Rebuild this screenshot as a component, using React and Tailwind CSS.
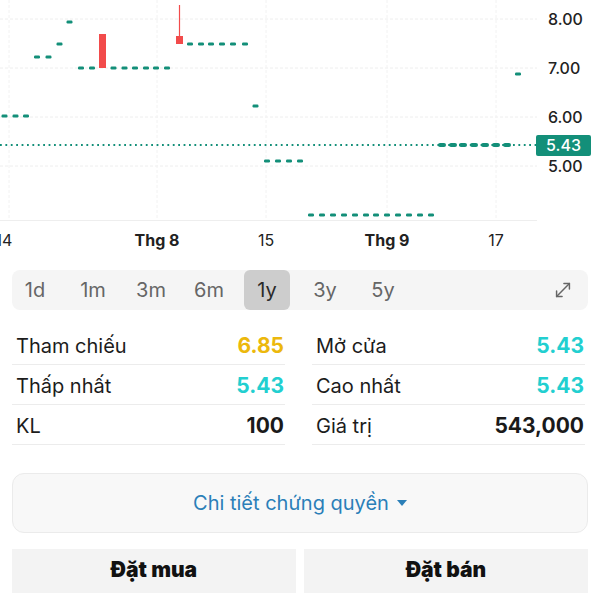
import React from "react";
import { MoveDiagonal } from "lucide-react";

const TEAL = "#138f79";

const dashes = [
  [4.5, 116], [15.5, 116], [26, 116],
  [37, 57], [48.5, 57],
  [59.5, 44],
  [69.5, 22],
  [81, 68], [92, 68],
  [113.5, 68], [124.5, 68], [135, 68], [146, 68], [156, 68], [167, 68],
  [190, 44], [201, 44], [211, 44], [222, 44], [233, 44], [245, 44],
  [255.5, 106],
  [267, 161], [278, 161], [289, 161], [300, 161],
  [311, 215], [322, 215], [333, 215], [344, 215], [355, 215], [366, 215],
  [376, 215], [387, 215], [398, 215], [409, 215], [420, 215], [431, 215],
  [518, 74],
];
const thick = [442, 453, 463, 474, 485, 496, 507];

function Chart() {
  const hGrid = [19, 68, 117, 166];
  const vGrid = [9, 157, 266, 387, 496];
  return (
    <svg width="600" height="270" viewBox="0 0 600 270" className="block">
      {hGrid.map((y) => (
        <line key={"h" + y} x1="0" x2="537" y1={y} y2={y} stroke="#eeeeee" strokeWidth="1" strokeDasharray="3 2" />
      ))}
      {vGrid.map((x) => (
        <line key={"v" + x} x1={x} x2={x} y1="0" y2="220" stroke="#f2f2f2" strokeWidth="1" strokeDasharray="3 2" />
      ))}
      <line x1="0" x2="537" y1="220.5" y2="220.5" stroke="#eeeeee" strokeWidth="1" />
      <line x1="0" x2="536" y1="145" y2="145" stroke={TEAL} strokeWidth="1.8" strokeDasharray="1.8 3.6" />
      {dashes.map(([x, y], i) => (
        <rect key={i} x={x - 3} y={y - 1.5} width="6" height="3" rx="1.2" fill={TEAL} />
      ))}
      {thick.map((x) => (
        <rect key={"t" + x} x={x - 4} y={143} width="8" height="4" rx="2" fill={TEAL} />
      ))}
      <rect x="99" y="34" width="7" height="34" fill="#f24b4b" />
      <line x1="179.5" x2="179.5" y1="5" y2="37" stroke="#f24b4b" strokeWidth="1.2" />
      <rect x="176" y="36" width="7" height="8" fill="#f24b4b" />
      <g fontFamily="Inter, 'Liberation Sans', sans-serif" fontSize="16" fontWeight="500" fill="#222">
        <text x="548" y="25">8.00</text>
        <text x="548" y="74">7.00</text>
        <text x="548" y="123">6.00</text>
        <text x="548" y="172">5.00</text>
      </g>
      <rect x="536" y="135" width="55" height="21" rx="2" fill={TEAL} />
      <text x="563.5" y="151" textAnchor="middle" fontFamily="Inter, 'Liberation Sans', sans-serif" fontSize="16" fontWeight="500" fill="#ffffff">5.43</text>
      <g fontFamily="Inter, 'Liberation Sans', sans-serif" fontSize="16" fill="#222" textAnchor="middle">
        <text x="4" y="246">14</text>
        <text x="157" y="246" fontWeight="700">Thg 8</text>
        <text x="266" y="246">15</text>
        <text x="387" y="246" fontWeight="700">Thg 9</text>
        <text x="496" y="246">17</text>
      </g>
    </svg>
  );
}

const ranges = ["1d", "1m", "3m", "6m", "1y", "3y", "5y"];

function Row({ label, value, color }) {
  return (
    <div className="flex h-10 items-center justify-between border-b border-[#ececec] pl-1 pr-[1px] pt-[3px]">
      <span className="text-[20px] text-[#1c1c1c]">{label}</span>
      <span className="text-[21px] font-bold" style={{ color }}>{value}</span>
    </div>
  );
}

export default function App() {
  return (
    <div className="relative h-[600px] w-[600px] overflow-hidden bg-white font-['Inter','Liberation_Sans',sans-serif]">
      <Chart />
      <div className="mx-3 flex h-10 items-center rounded-lg bg-[#f5f5f5] pr-3">
        <div className="flex gap-3">
          {ranges.map((r) => (
            <div
              key={r}
              className={
                r === "1y"
                  ? "flex h-10 w-[46px] items-center justify-center rounded-md bg-[#cdcdcd] text-[20px] text-[#2a2a2a]"
                  : "flex h-10 w-[46px] items-center justify-center text-[20px] text-[#666]"
              }
            >
              {r}
            </div>
          ))}
        </div>
        <div className="ml-auto flex items-center pr-[2px] text-[#666]">
          <MoveDiagonal size={22} strokeWidth={1.6} />
        </div>
      </div>
      <div className="mt-[15px] grid grid-cols-[273px_273px] gap-x-[27px] px-3">
        <div>
          <Row label="Tham chiếu" value="6.85" color="#ecb80c" />
          <Row label="Thấp nhất" value="5.43" color="#22cfd0" />
          <Row label="KL" value="100" color="#1a1a1a" />
        </div>
        <div>
          <Row label="Mở cửa" value="5.43" color="#22cfd0" />
          <Row label="Cao nhất" value="5.43" color="#22cfd0" />
          <Row label="Giá trị" value="543,000" color="#1a1a1a" />
        </div>
      </div>
      <div className="mx-3 mt-7 flex h-[60px] items-center justify-center gap-2 rounded-xl border border-[#ebebeb] bg-[#f8f8f8]">
        <span className="text-[20px] text-[#2b7fb8]">Chi tiết chứng quyền</span>
        <svg width="10" height="6" viewBox="0 0 10 6">
          <path d="M0 0 L10 0 L5 6 Z" fill="#2b7fb8" />
        </svg>
      </div>
      <div className="mt-4 grid grid-cols-2 gap-2 px-3">
        <div className="flex h-11 items-center justify-center pb-[3px] bg-[#f3f3f3] text-[21px] font-black text-[#111]">Đặt mua</div>
        <div className="flex h-11 items-center justify-center pb-[3px] bg-[#f3f3f3] text-[21px] font-black text-[#111]">Đặt bán</div>
      </div>
    </div>
  );
}
